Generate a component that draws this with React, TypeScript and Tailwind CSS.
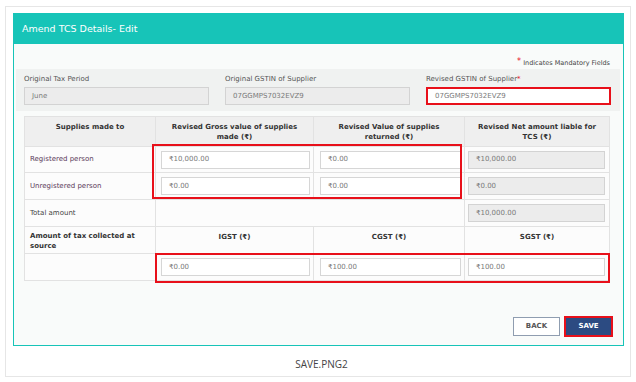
const verdana = { fontFamily: '"DejaVu Sans", Verdana, sans-serif' };

const Field = ({ value, grey, red }: { value: string; grey?: boolean; red?: boolean }) => (
  <div
    className={
      "h-[18px] flex items-center px-[7px] text-[7px] text-[#7a7a7a] " +
      (red
        ? "border-2 border-[#e8101a] bg-white"
        : grey
        ? "border border-[#d3d3d3] bg-[#ececec]"
        : "border border-[#d6d6d6] bg-white")
    }
  >
    {value}
  </div>
);

const Cell = ({ children, w, className = "" }: { children?: React.ReactNode; w: string; className?: string }) => (
  <div className={`${w} shrink-0 border-r border-[#e2e2e2] last:border-r-0 ${className}`}>{children}</div>
);

export default function App() {
  return (
    <div className="w-[636px] h-[382px] bg-white pt-[6px] px-[5px]" style={verdana}>
      <div className="h-[371px] border border-[#e6e6e6] pl-[7px] pt-[6px]">
        <div className="w-[611px] h-[333px] border border-[#17c4b8] flex flex-col">
          <div className="h-[30px] bg-[#17c4b8] flex items-center pl-[8px] text-[9.5px] text-white">
            Amend TCS Details- Edit
          </div>
          <div className="flex-1 bg-[#f9fbfa] flex flex-col">
            <div className="pt-[14px] pr-[13px] h-[25px] text-right text-[6.5px] text-[#444] leading-[10px]">
              <span className="text-[#e8101a] text-[8px] relative top-[-1px]">*</span> Indicates Mandatory Fields
            </div>
            <div className="ml-[2px] mr-[3px] h-[42px] bg-[#f0f2f1] grid grid-cols-3 gap-x-[16px] pl-[8px] pr-[9px] pt-[5px]">
              {[
                ["Original Tax Period", "June", "grey"],
                ["Original GSTIN of Supplier", "07GGMPS7032EVZ9", "grey"],
                ["Revised GSTIN of Supplier", "07GGMPS7032EVZ9", "red"],
              ].map(([label, value, kind]) => (
                <div key={label}>
                  <div className="text-[7px] leading-[10px] text-[#555] mb-[3px]">
                    {label}
                    {kind === "red" && <span className="text-[#e8101a]">*</span>}
                  </div>
                  <Field value={value} grey={kind === "grey"} red={kind === "red"} />
                </div>
              ))}
            </div>

            <div className="relative ml-[10px] mt-[5px] w-[586px] border border-[#e2e2e2] text-[7px] text-[#333]">
              <div className="flex h-[30px] bg-[#efefef] border-b border-[#e2e2e2] font-bold leading-[10px] text-center">
                <Cell w="w-[131px]" className="pt-[5px]">Supplies made to</Cell>
                <Cell w="w-[158px]" className="pt-[5px] px-[10px]">Revised Gross value of supplies made (₹)</Cell>
                <Cell w="w-[151px]" className="pt-[5px] px-[10px]">Revised Value of supplies returned (₹)</Cell>
                <Cell w="w-[144px]" className="pt-[5px] px-[8px]">Revised Net amount liable for TCS (₹)</Cell>
              </div>
              {[
                ["Registered person", "₹10,000.00", "₹0.00", "₹10,000.00", "h-[26px]"],
                ["Unregistered person", "₹0.00", "₹0.00", "₹0.00", "h-[27px]"],
              ].map(([label, a, b, c, h]) => (
                <div key={label} className={`flex ${h} bg-[#fcfcfc] border-b border-[#e2e2e2] items-stretch`}>
                  <Cell w="w-[131px]" className="flex items-center pl-[5px] text-[#5b3b59]">{label}</Cell>
                  <Cell w="w-[158px]" className="flex flex-col justify-center pl-[5px] pr-[3px]"><Field value={a} /></Cell>
                  <Cell w="w-[151px]" className="flex flex-col justify-center pl-[6px] pr-[3px]"><Field value={b} /></Cell>
                  <Cell w="w-[144px]" className="flex flex-col justify-center pl-[3px] pr-[4px]"><Field value={c} grey /></Cell>
                </div>
              ))}
              <div className="flex h-[27px] bg-[#fcfcfc] border-b border-[#e2e2e2]">
                <Cell w="w-[131px]" className="flex items-center pl-[5px] text-[#444]">Total amount</Cell>
                <div className="w-[309px] shrink-0 border-r border-[#e2e2e2]" />
                <Cell w="w-[144px]" className="flex flex-col justify-center pl-[3px] pr-[4px]"><Field value="₹10,000.00" grey /></Cell>
              </div>
              <div className="flex h-[27px] bg-[#fcfcfc] border-b border-[#e2e2e2] font-bold leading-[10px]">
                <Cell w="w-[131px]" className="pl-[5px] pt-[4px] pr-[10px]">Amount of tax collected at source</Cell>
                <Cell w="w-[158px]" className="text-center pt-[5px]">IGST (₹)</Cell>
                <Cell w="w-[151px]" className="text-center pt-[5px]">CGST (₹)</Cell>
                <Cell w="w-[144px]" className="text-center pt-[5px]">SGST (₹)</Cell>
              </div>
              <div className="flex h-[26px] bg-[#fcfcfc]">
                <Cell w="w-[131px]" />
                <Cell w="w-[158px]" className="flex flex-col justify-center pl-[5px] pr-[3px]"><Field value="₹0.00" /></Cell>
                <Cell w="w-[151px]" className="flex flex-col justify-center pl-[6px] pr-[3px]"><Field value="₹100.00" /></Cell>
                <Cell w="w-[144px]" className="flex flex-col justify-center pl-[3px] pr-[4px]"><Field value="₹100.00" /></Cell>
              </div>

              <div className="absolute left-[127px] top-[27px] w-[310px] h-[55px] border-2 border-[#e8101a]" />
              <div className="absolute left-[130px] top-[136px] w-[455px] h-[30px] border-2 border-[#e8101a]" />
            </div>

            <div className="flex justify-end items-center gap-[4px] pr-[10px] mt-[35px]">
              <button className="w-[47px] h-[19px] bg-white border border-[#8f9db0] text-[7px] text-[#555] font-bold">
                BACK
              </button>
              <button className="w-[49px] h-[21px] bg-[#2c4b82] border-2 border-[#e8101a] text-[7px] text-white font-bold">
                SAVE
              </button>
            </div>
          </div>
        </div>
        <div
          className="text-center text-[10px] text-[#444] mt-[11px]"
          style={{ fontFamily: '"Open Sans", sans-serif' }}
        >
          SAVE.PNG2
        </div>
      </div>
    </div>
  );
}
